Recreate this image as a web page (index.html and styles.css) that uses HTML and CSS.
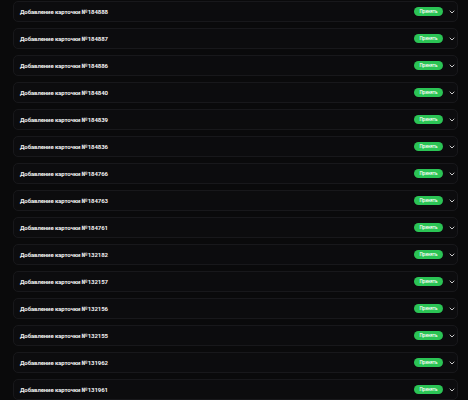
FILE: index.html
```html
<!DOCTYPE html>
<html lang="ru">
<head>
    <meta charset="UTF-8">
    <meta name="viewport" content="width=device-width, initial-scale=1.0">
    <title>Заявки</title>
    <link rel="stylesheet" href="styles.css">
</head>
<body>
    <div class="list">
        <div class="item"><span class="title">Добавление карточки №184888</span><span class="badge">Принять</span><svg class="chevron" viewBox="0 0 8 8"><path d="M2 3l2 2 2-2"/></svg></div>
        <div class="item"><span class="title">Добавление карточки №184887</span><span class="badge">Принять</span><svg class="chevron" viewBox="0 0 8 8"><path d="M2 3l2 2 2-2"/></svg></div>
        <div class="item"><span class="title">Добавление карточки №184886</span><span class="badge">Принять</span><svg class="chevron" viewBox="0 0 8 8"><path d="M2 3l2 2 2-2"/></svg></div>
        <div class="item"><span class="title">Добавление карточки №184840</span><span class="badge">Принять</span><svg class="chevron" viewBox="0 0 8 8"><path d="M2 3l2 2 2-2"/></svg></div>
        <div class="item"><span class="title">Добавление карточки №184839</span><span class="badge">Принять</span><svg class="chevron" viewBox="0 0 8 8"><path d="M2 3l2 2 2-2"/></svg></div>
        <div class="item"><span class="title">Добавление карточки №184836</span><span class="badge">Принять</span><svg class="chevron" viewBox="0 0 8 8"><path d="M2 3l2 2 2-2"/></svg></div>
        <div class="item"><span class="title">Добавление карточки №184766</span><span class="badge">Принять</span><svg class="chevron" viewBox="0 0 8 8"><path d="M2 3l2 2 2-2"/></svg></div>
        <div class="item"><span class="title">Добавление карточки №184763</span><span class="badge">Принять</span><svg class="chevron" viewBox="0 0 8 8"><path d="M2 3l2 2 2-2"/></svg></div>
        <div class="item"><span class="title">Добавление карточки №184761</span><span class="badge">Принять</span><svg class="chevron" viewBox="0 0 8 8"><path d="M2 3l2 2 2-2"/></svg></div>
        <div class="item"><span class="title">Добавление карточки №132182</span><span class="badge">Принять</span><svg class="chevron" viewBox="0 0 8 8"><path d="M2 3l2 2 2-2"/></svg></div>
        <div class="item"><span class="title">Добавление карточки №132157</span><span class="badge">Принять</span><svg class="chevron" viewBox="0 0 8 8"><path d="M2 3l2 2 2-2"/></svg></div>
        <div class="item"><span class="title">Добавление карточки №132156</span><span class="badge">Принять</span><svg class="chevron" viewBox="0 0 8 8"><path d="M2 3l2 2 2-2"/></svg></div>
        <div class="item"><span class="title">Добавление карточки №132155</span><span class="badge">Принять</span><svg class="chevron" viewBox="0 0 8 8"><path d="M2 3l2 2 2-2"/></svg></div>
        <div class="item"><span class="title">Добавление карточки №131962</span><span class="badge">Принять</span><svg class="chevron" viewBox="0 0 8 8"><path d="M2 3l2 2 2-2"/></svg></div>
        <div class="item"><span class="title">Добавление карточки №131961</span><span class="badge">Принять</span><svg class="chevron" viewBox="0 0 8 8"><path d="M2 3l2 2 2-2"/></svg></div>
    </div>
</body>
</html>
```

FILE: styles.css
```css
* {
    margin: 0;
    padding: 0;
    box-sizing: border-box;
}

body {
    background: #0a0a0b;
    font-family: Roboto, "Noto Sans", sans-serif;
    color: #f2f2f2;
    overflow: hidden;
}

.list {
    display: flex;
    flex-direction: column;
    gap: 6px;
    padding: 1px 10px 0 13px;
}

.item {
    display: flex;
    align-items: center;
    height: 21px;
    padding: 0 1px 0 6px;
    background: #0c0c0e;
    border: 1px solid #18181b;
    border-radius: 5px;
}

.title {
    flex: 1;
    font-size: 6px;
    font-weight: 700;
    letter-spacing: -0.1px;
}

.badge {
    background: #2bc455;
    color: #fff;
    font-size: 4.5px;
    font-weight: 500;
    padding: 1.5px 5.5px;
    border-radius: 5px;
    line-height: 6px;
}

.chevron {
    width: 8px;
    height: 8px;
    margin-left: 5px;
    fill: none;
    stroke: #c8c8c8;
    stroke-width: 1;
    stroke-linecap: round;
    stroke-linejoin: round;
}
```
